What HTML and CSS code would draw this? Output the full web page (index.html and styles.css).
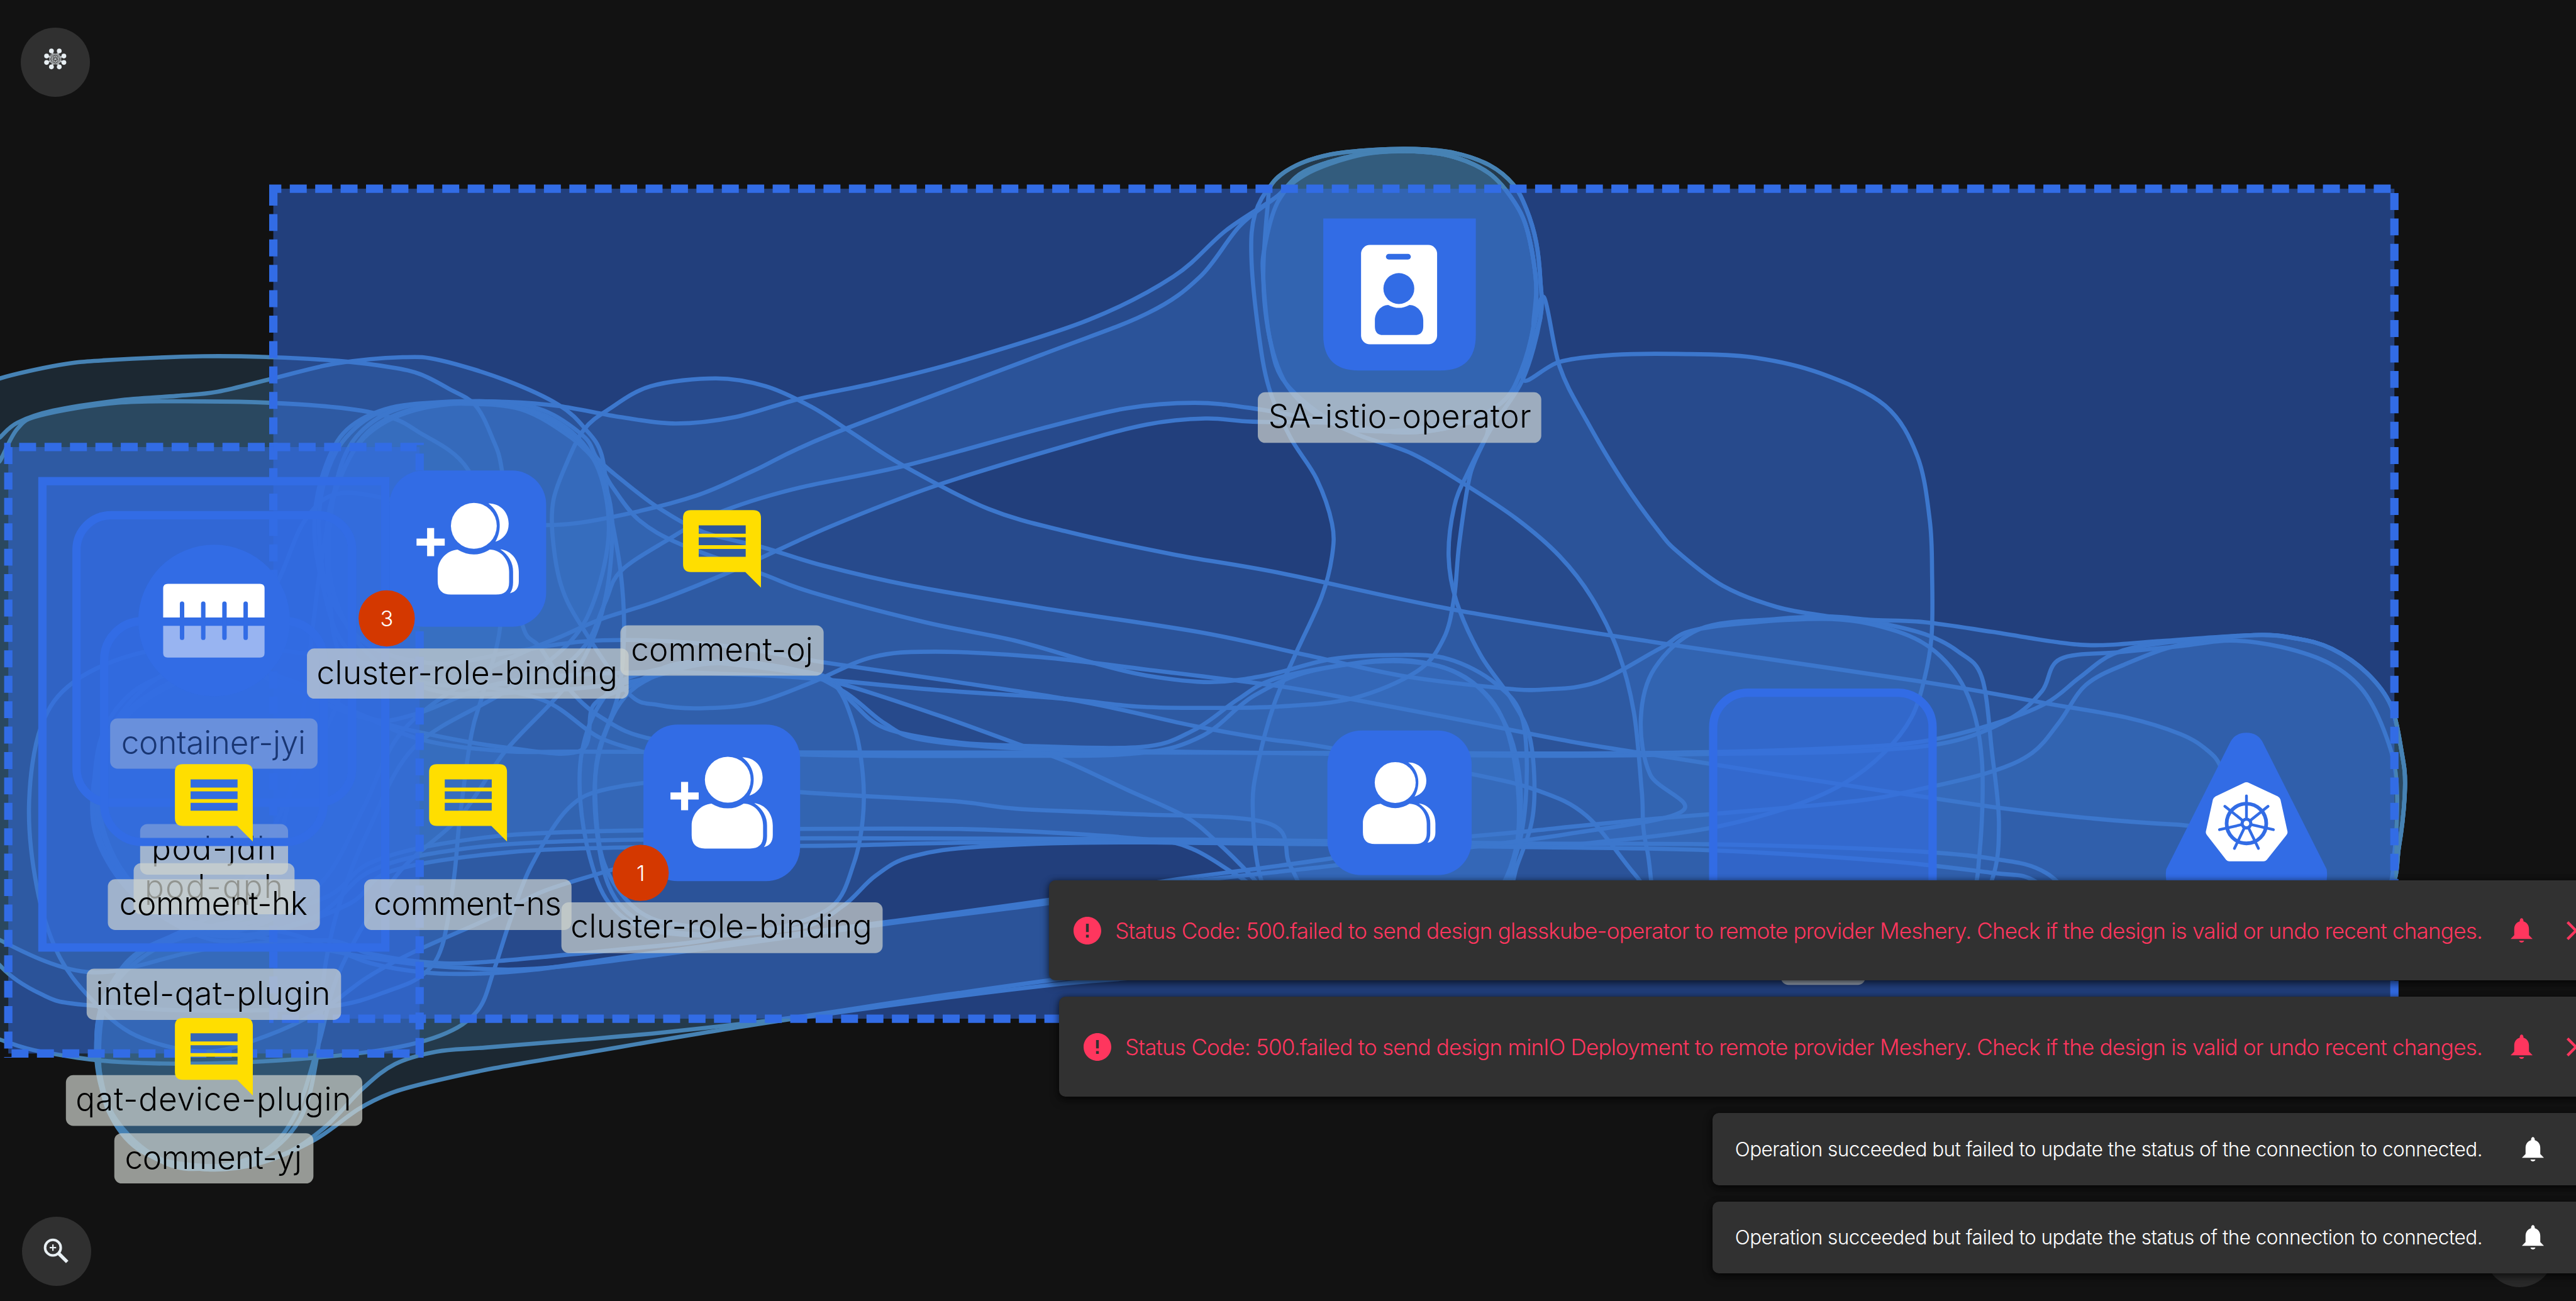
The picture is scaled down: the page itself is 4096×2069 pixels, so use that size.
FILE: index.html
```html
<!DOCTYPE html>
<html lang="en">
<head>
<meta charset="utf-8">
<title>Design canvas</title>
<link rel="stylesheet" href="styles.css">
</head>
<body>
<main class="workspace">
<svg class="canvas" viewBox="0 0 5589 2823">
  <defs>
    <symbol id="comment" viewBox="0 0 189 189" overflow="visible">
      <path fill="#ffde00" fill-rule="evenodd" d="M19 0H170Q189 0 189 19V188L151 150H19Q0 150 0 131V19Q0 0 19 0ZM38 37V57H152V37ZM38 66V85H152V66ZM38 94V113H152V94Z"/>
    </symbol>
    <g id="people">
      <circle cx="344" cy="462" r="52"/>
      <path d="M377 411C404 411 423 431 423 457C423 479 411 492 393 498C408 472 408 434 377 411Z"/>
      <path d="M307 516Q325 527 344 527Q363 527 380 516C406 516 424 540 424 566V590Q424 618 394 618H292Q262 618 262 588V566C262 540 282 518 307 516Z"/>
      <path d="M404 515C430 518 446 540 446 566V588Q446 610 426 615Q433 605 433 590V566Q433 535 404 515Z"/>
    </g>
    <path id="plus" d="M238 467H254V491H278V507H254V531H238V507H214V491H238Z"/>
  </defs>
  <g id="bubbles" class="bubbles"></g>

  <rect class="group-fill" x="593" y="409.5" width="4602" height="1801"/>
  <g class="dashes">
    <path d="M584 409.5H5204" stroke-dashoffset="10.4"/>
    <path d="M593 400.5V2219" stroke-dashoffset="46.4"/>
    <path d="M5195 400.5V2219" stroke-dashoffset="36.8"/>
    <path d="M584 2210.5H5204" stroke-dashoffset="27.4"/>
  </g>
  <rect class="group-fill" x="18" y="970" width="892.5" height="1316"/>
  <g class="dashes">
    <path d="M9 970H904" stroke-dashoffset="22.6"/>
    <path d="M18 961V2295" stroke-dashoffset="46"/>
    <path d="M910.5 961V2295" stroke-dashoffset="32.1"/>
    <path d="M9 2286H919" stroke-dashoffset="39.1"/>
  </g>
  <rect class="group-box" x="92" y="1044" width="744" height="1012"/>
  <rect class="group-box" x="166" y="1118" width="598" height="624" rx="75"/>
  <g class="label"><rect x="239" y="1559" width="450" height="109" rx="16"/><text x="263" y="1636" textLength="400">container-jyi</text></g>
  <g class="label"><rect x="304" y="1788" width="321" height="110" rx="16"/><text x="329" y="1865" textLength="270">pod-jdh</text></g>
  <rect class="group-box" x="226" y="1348" width="476" height="479" rx="83"/>
  <g class="node">
    <circle cx="464.5" cy="1346.500" r="164.5"/>
    <path fill="#fff" d="M354 1340V1277Q354 1267 364 1267H564Q574 1267 574 1277V1340Z"/>
    <path fill="#98b4f1" d="M354 1358H574V1417Q574 1427 564 1427H364Q354 1427 354 1417Z"/>
    <path class="slots" d="M395 1310V1384M441 1310V1384M487 1310V1384M533 1310V1384"/>
  </g>
  <g class="label"><rect x="290" y="1873" width="349" height="111" rx="16"/><text x="314" y="1949" textLength="300">pod-qph</text></g>

  <rect class="group-box" x="3717" y="1503" width="476" height="490" rx="75"/>
  <g class="label"><rect x="3864" y="2028" width="183" height="109" rx="16"/></g>

  <g class="node">
    <rect x="845" y="1021" width="340" height="339" rx="74"/>
    <g class="glyph" transform="translate(699 699) scale(.9566)"><use href="#people"/><use href="#plus"/></g>
    <rect x="1396" y="1572" width="340" height="340" rx="74"/>
    <g class="glyph" transform="translate(1250 1250) scale(.9566)"><use href="#people"/><use href="#plus"/></g>
    <rect x="2880" y="1585" width="313" height="314" rx="74"/>
    <g class="glyph" transform="translate(2733 1303) scale(.855)"><use href="#people"/></g>
    <path d="M2871 474H3202V727Q3202 804 3125 804H2948Q2871 804 2871 727Z"/>
    <rect class="glyph" x="2953" y="531.5" width="165" height="215.5" rx="19"/>
    <rect x="3007" y="551" width="54" height="12" rx="6"/>
    <circle cx="3035" cy="626" r="33.5"/>
    <path d="M3012 661.600Q3024 668 3035 668T3058 661.600C3075 662 3088 677 3088 695V708Q3088 727 3069 727H3001Q2983 727 2983 708V695C2983 677 2996 662 3012 661.600Z"/>
    <path d="M4838 1612Q4849 1590 4874 1590T4910 1612L5048 1886Q5056 1940 5000 1950H4748Q4692 1940 4700 1886Z"/>
    <path class="glyph" d="M4868 1699Q4874 1696 4880 1699L4942 1728Q4947 1731 4948 1736L4963 1804Q4964 1809 4960 1813L4918 1866Q4915 1869 4911 1869H4837Q4833 1869 4830 1866L4789 1813Q4785 1809 4786 1804L4801 1736Q4802 1731 4807 1728Z"/>
    <g transform="translate(4874 1787)">
      <circle class="wheel" r="43"/>
      <g id="spokes"></g>
      <circle r="13"/><circle class="glyph" r="6"/>
    </g>
  </g>

  <g class="label"><rect x="666" y="1407" width="698" height="109" rx="16"/><text x="687" y="1484" textLength="653">cluster-role-binding</text></g>
  <use href="#comment" x="379.500" y="1658" width="169" height="169"/>
  <use href="#comment" x="931" y="1658" width="169" height="169"/>
  <use href="#comment" x="1482" y="1107" width="169" height="169"/>
  <g class="label"><rect x="2729" y="851" width="615" height="110" rx="16"/><text x="2752" y="928" textLength="570">SA-istio-operator</text></g>
  <g class="label"><rect x="1346" y="1357" width="441" height="109" rx="16"/><text x="1369" y="1434" textLength="395">comment-oj</text></g>
  <g class="label"><rect x="234" y="1908" width="460" height="110" rx="16"/><text x="259" y="1985" textLength="408">comment-hk</text></g>
  <g class="label"><rect x="790" y="1908" width="450" height="110" rx="16"/><text x="811" y="1985" textLength="407">comment-ns</text></g>
  <g class="label"><rect x="1218" y="1958" width="697" height="110" rx="16"/><text x="1238" y="2035" textLength="654">cluster-role-binding</text></g>
  <g class="label"><rect x="188" y="2102" width="552" height="111" rx="16"/><text x="208" y="2180" textLength="509">intel-qat-plugin</text></g>
  <g class="label"><rect x="143" y="2333" width="643" height="110" rx="16"/><text x="164" y="2410" textLength="598">qat-device-plugin</text></g>
  <use href="#comment" x="379.500" y="2209" width="169" height="169"/>
  <g class="label"><rect x="248" y="2459" width="432" height="109" rx="16"/><text x="271" y="2536" textLength="384">comment-yj</text></g>

  <g class="badge"><circle cx="839" cy="1342" r="61"/><text x="839" y="1359">3</text><circle cx="1390" cy="1894" r="61"/><text x="1390" y="1911">1</text></g>
</svg>

<button class="fab fab-menu" aria-label="Menu">
  <svg viewBox="0 0 150 150"><g id="mesh" transform="translate(75 68)"></g></svg>
</button>
<button class="fab fab-zoom" aria-label="Zoom">
  <svg viewBox="0 0 150 150"><g class="lens"><circle cx="67" cy="67" r="17"/><path d="M79 79L98 98" stroke-width="7.500"/><path d="M60 67H74M67 60V74" stroke-width="3"/></g></svg>
</button>
<div class="fab fab-help"></div>

<section class="toasts">
  <div class="toast error">
    <svg class="alert" viewBox="2 2 20 20"><path d="M12 2C6.480 2 2 6.480 2 12s4.480 10 10 10 10-4.480 10-10S17.520 2 12 2zm1 15h-2v-2h2v2zm0-4h-2V7h2v6z"/></svg>
    <span class="msg">Status Code: 500.failed to send design glasskube-operator to remote provider Meshery. Check if the design is valid or undo recent changes.</span>
    <div class="actions"><svg class="bell" viewBox="3 2 18 20"><path d="M12 22c1.100 0 2-.9 2-1.600h-4c0 .7.900 1.600 2 1.600zm6-6v-5c0-3.070-1.640-5.640-4.500-6.320V4c0-.83-.67-1.900-1.500-1.900s-1.500 1.070-1.500 1.900v.68C7.630 5.360 6 7.920 6 11v5l-3 3h18l-3-3z"/></svg><svg class="close" viewBox="5 5 14 14"><path d="M19 6.410L17.590 5 12 10.590 6.410 5 5 6.410 10.590 12 5 17.590 6.410 19 12 13.410 17.590 19 19 17.590 13.410 12z"/></svg></div>
  </div>
  <div class="toast error">
    <svg class="alert" viewBox="2 2 20 20"><path d="M12 2C6.480 2 2 6.480 2 12s4.480 10 10 10 10-4.480 10-10S17.520 2 12 2zm1 15h-2v-2h2v2zm0-4h-2V7h2v6z"/></svg>
    <span class="msg">Status Code: 500.failed to send design minIO Deployment to remote provider Meshery. Check if the design is valid or undo recent changes.</span>
    <div class="actions"><svg class="bell" viewBox="3 2 18 20"><path d="M12 22c1.100 0 2-.9 2-1.600h-4c0 .7.900 1.600 2 1.600zm6-6v-5c0-3.070-1.640-5.640-4.500-6.320V4c0-.83-.67-1.900-1.500-1.900s-1.500 1.070-1.500 1.900v.68C7.630 5.360 6 7.920 6 11v5l-3 3h18l-3-3z"/></svg><svg class="close" viewBox="5 5 14 14"><path d="M19 6.410L17.590 5 12 10.590 6.410 5 5 6.410 10.590 12 5 17.590 6.410 19 12 13.410 17.590 19 19 17.590 13.410 12z"/></svg></div>
  </div>
  <div class="toast info">
    <span class="msg">Operation succeeded but failed to update the status of the connection to connected.</span>
    <div class="actions"><svg class="bell" viewBox="3 2 18 20"><path d="M12 22c1.100 0 2-.9 2-1.600h-4c0 .7.900 1.600 2 1.600zm6-6v-5c0-3.070-1.640-5.640-4.500-6.320V4c0-.83-.67-1.900-1.500-1.900s-1.500 1.070-1.500 1.900v.68C7.630 5.360 6 7.920 6 11v5l-3 3h18l-3-3z"/></svg></div>
  </div>
  <div class="toast info">
    <span class="msg">Operation succeeded but failed to update the status of the connection to connected.</span>
    <div class="actions"><svg class="bell" viewBox="3 2 18 20"><path d="M12 22c1.100 0 2-.9 2-1.600h-4c0 .7.900 1.600 2 1.600zm6-6v-5c0-3.070-1.640-5.640-4.500-6.320V4c0-.83-.67-1.900-1.500-1.900s-1.500 1.070-1.500 1.900v.68C7.630 5.360 6 7.920 6 11v5l-3 3h18l-3-3z"/></svg></div>
  </div>
</section>
</main>
<script src="bubbles.js"></script>
</body>
</html>
```
FILE: styles.css
```css
* { box-sizing: border-box; }
body { margin: 0; background: #121212; overflow: hidden; font-family: Inter, "Noto Sans", sans-serif; font-weight: 300; }
.workspace { position: relative; width: 4096px; height: 2069px; overflow: hidden; }
.canvas { display: block; width: 4096px; height: 2069px; }
.bubbles path { fill: #4682b4; fill-opacity: .2; stroke: #4682b4; stroke-width: 9; }
.group-fill { fill: #326ce5; fill-opacity: .5; }
.dashes path { fill: none; stroke: #326ce5; stroke-width: 18; stroke-dasharray: 36.76 18.38; }
.group-box { fill: #326ce5; fill-opacity: .5; stroke: #326ce5; stroke-width: 18; }
.node { fill: #326ce5; }
.slots { stroke: #326ce5; stroke-width: 9.6; stroke-linecap: round; }
.glyph { fill: #fff; }
.wheel { fill: none; stroke: #326ce5; stroke-width: 8; }
.spoke { stroke: #326ce5; stroke-width: 6; stroke-linecap: round; }
.label rect { fill: #cfd3cd; fill-opacity: .7; }
.label text { font-size: 70px; fill: #000; }
.badge { fill: #d43800; }
.badge text { fill: #fff; font-size: 47px; text-anchor: middle; }

.fab { position: absolute; width: 110px; height: 110px; padding: 0; border: 0; border-radius: 50%; background: #303030; }
.fab svg { display: block; width: 110px; height: 110px; }
.fab-menu { left: 33px; top: 44px; }
.fab-zoom { left: 35px; top: 1935px; }
.fab-help { left: 3951px; top: 1937px; background: #2a2a2a; }
.lens { fill: none; stroke: #e8eff3; stroke-width: 5.5; }
.mesh-dot { fill: #e8eff3; }
.mesh-link { stroke: #e8eff3; stroke-width: .8; }

.toasts { position: absolute; right: -110px; bottom: 44px; display: flex; flex-direction: column; align-items: flex-end; gap: 26px; }
.toast { display: flex; align-items: center; border-radius: 10px; background: #313131; white-space: nowrap; box-shadow: 0 6px 14px rgba(0,0,0,.5), 0 0 10px rgba(0,0,0,.4); }
.toast svg { fill: currentColor; display: block; flex: none; }
.error { height: 159px; padding-left: 39px; color: #ff365e; font-size: 35px; letter-spacing: -.79px; }
.info { height: 114.500px; padding-left: 36px; color: #fff; font-size: 31.500px; letter-spacing: -.54px; }
.alert { width: 44px; height: 44px; margin-right: 22px; }
.actions { display: flex; align-items: center; width: 259px; }
.bell { width: 39px; height: 39px; }
.error .bell { margin-left: 43px; }
.info .bell { margin-left: 61px; }
.close { width: 30px; height: 30px; margin-left: 52px; }
```
FILE: bubbles.js
```js
const SVG = 'http://www.w3.org/2000/svg';

function add(parent, tag, attrs) {
  const el = document.createElementNS(SVG, tag);
  for (const k in attrs) el.setAttribute(k, attrs[k]);
  parent.appendChild(el);
}

// Closed outline of each relationship set, as x,y pairs on the canvas.
const saTop = [2761,397, 2812,359, 2887,335, 2979,325, 3071,323, 3157,332, 3231,358, 3283,400, 3312,454, 3333,525, 3342,607];
const saInner = [2789,831, 2755,735, 2741,607, 2743,541, 2772,439, 2830,380, 2944,338, 3048,328, 3145,338, 3231,376, 3286,439, 3315,505, 3333,617, 3327,709, 3300,806, 3260,872, 3174,918, 3094,936, 3002,936];
const saMid = [2772,425, 2830,372, 2944,336, 3048,328, 3145,338, 3231,376, 3286,439, 3315,505, 3333,617, 3327,709, 3300,806, 3260,872, 3174,918, 3094,936, 3002,936, 2898,918];
const triangle = [4891,1378, 4985,1386, 5060,1408, 5135,1460, 5187,1530, 5211,1633, 5218,1710, 5205,1837, 5180,1940, 5050,2060, 4891,2090];
const triangleIn = [4731,1402, 4840,1390, 4950,1404, 5055,1440, 5128,1500, 5178,1600, 5200,1700, 5195,1850, 5170,1950, 5040,2060, 4880,2090, 4700,2070];

const sets = [
  [...saMid, 2718,886, 2592,874, 2443,886, 2259,930, 1961,1011, 1719,1062, 1553,1115, 1446,1173, 1346,1240, 1313,1307, 1270,1400, 1190,1460, 1015,1490, 830,1460, 740,1390, 700,1270, 682,1150, 697,1040, 745,940, 835,888, 965,872, 1097,872, 1213,881, 1346,905, 1466,919, 1595,905, 1736,865, 1900,831, 2087,783, 2362,694, 2546,600, 2660,500],
  [...saMid, 2718,915, 2615,908, 2489,921, 2317,966, 2030,1054, 1800,1143, 1595,1236, 1429,1303, 1305,1343, 1213,1383, 1139,1414, 1014,1477, 870,1590, 790,1750, 710,1900, 600,1990, 464,2020, 310,1950, 232,1854, 205,1746, 220,1600, 290,1500, 420,1440, 540,1380, 606,1255, 663,1127, 740,1070, 900,1095, 1060,1130, 1205,1139, 1346,1118, 1512,1075, 1636,1021, 1800,944, 2259,770, 2489,680, 2604,600, 2690,490],
  [...saTop, 3342,690, 3304,823, 3235,930, 3183,1029, 3155,1100, 3143,1207, 3160,1305, 3212,1421, 3281,1520, 3321,1609, 3327,1760, 3292,1877, 3240,2000, 3036,2060, 2800,2010, 2736,1908, 2718,1752, 2730,1654, 2764,1529, 2810,1421, 2867,1296, 2890,1207, 2890,1136, 2856,1038, 2799,948, 2753,841, 2730,716, 2715,556, 2723,464],
  [...saInner.slice(2,28), 3350,645, 3384,796, 3442,912, 3522,1046, 3600,1154, 3643,1200, 3738,1271, 3855,1317, 3972,1338, 4059,1348, 4176,1376, 4249,1414, 4300,1470, 4322,1633, 4337,1786, 4322,1909, 4250,2040, 3955,2080, 3640,2040, 3573,1841, 3562,1716, 3545,1546, 3510,1412, 3453,1296, 3384,1207, 3292,1127, 3178,1051, 3063,984, 2948,944, 2850,895, 2789,831],
  [...saTop, 3342,690, 3304,823, 3384,785, 3500,770, 3640,768, 3800,775, 3950,810, 4090,880, 4160,990, 4187,1130, 4192,1250, 4191,1378, 4176,1470, 4147,1557, 4088,1633, 4001,1700, 3884,1751, 3709,1797, 3490,1825, 3300,1836, 2750,1829, 2144,1828, 1800,1835, 1400,1838, 1097,1850, 850,1890, 760,1960, 600,2020, 464,2040, 310,1960, 225,1854, 200,1746, 230,1600, 330,1480, 464,1430, 640,1500, 800,1560, 900,1550, 1097,1480, 1379,1459, 1595,1463, 1761,1472, 2030,1497, 2294,1515, 2466,1533, 2604,1536, 2776,1533, 2936,1515, 3074,1457, 3132,1386, 3155,1296, 3166,1180, 3190,1029, 3228,930, 3174,918, 3002,936, 2898,918, 2789,831, 2755,735, 2741,607, 2750,450],
  [-60,850, 0,821, 128,792, 223,782, 440,773, 587,775, 734,783, 849,797, 912,812, 973,843, 1031,879, 1068,950, 1089,1021, 1105,1200, 1135,1361, 1172,1405, 1230,1490, 1305,1557, 1421,1605, 1700,1636, 2207,1640, 2474,1634, 2610,1596, 2720,1510, 2850,1455, 3040,1435, 3180,1470, 3270,1580, 3300,1740, 3270,1900, 3180,2010, 3036,2040, 2870,1990, 2800,1880, 2750,1786, 2446,1766, 2207,1755, 2063,1738, 1738,1719, 1500,1695, 1322,1711, 1232,1755, 1152,1880, 1107,1997, 1072,2104, 1036,2193, 955,2247, 804,2282, 536,2305, 268,2305, 89,2282, 0,2256, -60,2235],
  [-40,990, 0,949, 38,917, 115,891, 255,869, 383,859, 472,850, 593,821, 727,789, 874,775, 957,782, 1097,825, 1213,879, 1271,932, 1305,986, 1321,1093, 1346,1236, 1354,1370, 1341,1508, 1298,1633, 1292,1740, 1307,1862, 1355,1948, 1422,1996, 1530,2015, 1560,2032, 1500,2045, 1400,2055, 1072,2086, 938,2089, 804,2070, 700,2040, 446,2060, 200,2110, 0,2040, -60,1980],
  [-30,1050, 0,1000, 38,930, 89,901, 255,874, 440,871, 587,874, 740,885, 842,904, 906,936, 1014,1017, 1080,1200, 1085,1361, 1048,1504, 1023,1593, 998,1772, 985,1905, 960,2050, 920,2113, 848,2148, 714,2184, 446,2193, 179,2180, 89,2157, 0,2095, -50,2000],
  [1267,932, 1321,888, 1412,838, 1553,821, 1661,838, 1761,883, 1850,940, 1961,1011, 2144,1104, 2317,1154, 2546,1203, 2776,1243, 3155,1323, 3600,1395, 4176,1480, 4439,1526, 4614,1557, 4731,1593, 4789,1628, 4818,1664, 4840,1740, 4800,1790, 4716,1789, 4541,1776, 4322,1751, 3884,1685, 3600,1640, 3407,1609, 3178,1564, 2948,1520, 2776,1489, 2489,1453, 2259,1426, 2030,1414, 1892,1426, 1761,1481, 1636,1526, 1520,1537, 1429,1530, 1363,1504, 1263,1361, 1218,1272, 1199,1164, 1201,1084, 1230,1004],
  [750,950, 835,890, 965,873, 1097,873, 1190,895, 1270,950, 1296,995, 1346,1039, 1429,1102, 1528,1155, 1653,1187, 1785,1227, 1972,1270, 2259,1319, 2604,1372, 2833,1421, 3040,1466, 3258,1493, 3350,1496, 3465,1480, 3600,1408, 3690,1364, 3951,1343, 4100,1365, 4200,1415, 4270,1510, 4300,1650, 4295,1850, 4270,1950, 4150,2050, 3800,2050, 3630,1990, 3545,1895, 3442,1770, 3338,1716, 3195,1680, 2856,1618, 2750,1604, 2589,1575, 2350,1523, 2044,1475, 1786,1437, 1600,1405, 1420,1390, 1263,1392, 1114,1414, 950,1440, 800,1400, 715,1290, 692,1150, 705,1040],
  [790,930, 880,882, 1000,876, 1130,888, 1240,950, 1300,1010, 1329,1057, 1387,1129, 1479,1182, 1653,1245, 1761,1285, 2007,1350, 2202,1390, 2374,1439, 2489,1466, 2627,1480, 2753,1464, 2890,1430, 3028,1421, 3143,1430, 3246,1484, 3304,1564, 3310,1740, 3280,1880, 3200,2000, 2900,2020, 2790,1990, 2714,1900, 2637,1824, 2570,1771, 2446,1714, 2312,1652, 2207,1614, 2044,1555, 1843,1489, 1709,1456, 1537,1440, 1365,1480, 1160,1500, 950,1500, 800,1420, 725,1290, 715,1150, 740,1010],
  [1259,1629, 1288,1530, 1365,1490, 1450,1445, 1537,1437, 1709,1456, 1795,1470, 1850,1525, 1920,1580, 2063,1609, 2207,1618, 2474,1621, 2589,1585, 2685,1518, 2760,1475, 2900,1445, 3040,1432, 3160,1460, 3250,1540, 3290,1680, 3290,1840, 3240,1960, 3036,2030, 2800,1970, 2685,1900, 2589,1843, 2494,1822, 2207,1803, 1920,1798, 1250,1805, 982,1827, 804,1872, 700,1950, 464,2010, 290,1920, 215,1746, 270,1560, 464,1455, 640,1490, 799,1557, 915,1590, 1097,1622],
  [1280,1861, 1259,1736, 1263,1629, 1300,1530, 1365,1470, 1537,1437, 1700,1450, 1805,1480, 1853,1575, 1872,1680, 1872,1776, 1853,1872, 1805,1967, 1680,2015, 1540,2030, 1400,2015, 1321,1959],
  [...triangle, 4700,2070, 4540,1990, 4439,1894, 4322,1863, 4118,1845, 3709,1832, 3300,1830, 2600,1822, 1800,1819, 1250,1825, 982,1845, 804,1890, 680,1990, 464,2030, 290,1930, 210,1746, 260,1560, 464,1445, 640,1480, 760,1540, 915,1605, 1097,1630, 1263,1631, 1900,1633, 2600,1633, 3300,1635, 3709,1632, 4030,1621, 4176,1608, 4322,1572, 4439,1526, 4512,1470, 4585,1419, 4687,1396],
  [...triangleIn, 4500,1980, 4410,1909, 4322,1894, 4088,1868, 3709,1845, 3300,1838, 2494,1828, 2144,1836, 1980,1858, 1900,1900, 1830,1965, 1740,2012, 1540,2028, 1400,2005, 1320,1920, 1290,1740, 1310,1600, 1380,1490, 1537,1437, 1720,1452, 1830,1500, 1920,1570, 2000,1605, 2207,1624, 2474,1630, 3300,1640, 3709,1636, 4030,1630, 4230,1610, 4360,1560, 4430,1500, 4470,1430, 4600,1415],
  [...triangle, 3500,2080, 2700,2095, 2465,2121, 2302,2135, 2015,2170, 1633,2224, 1250,2288, 1072,2318, 929,2349, 848,2372, 777,2407, 680,2475, 560,2525, 446,2537, 330,2510, 250,2430, 213,2330, 213,2220, 245,2130, 310,2060, 446,2014, 600,2020, 714,2055, 804,2090, 920,2110, 1027,2113, 1161,2104, 1400,2070, 1920,2001, 2274,1953, 2541,1910, 2879,1864, 3100,1825, 3300,1805, 3563,1779, 4001,1741, 4176,1710, 4322,1674, 4410,1633, 4468,1567, 4526,1486, 4614,1440, 4731,1399],
  [3690,1364, 3855,1343, 3972,1338, 4059,1345, 4176,1350, 4322,1371, 4468,1394, 4556,1400, 4687,1391, ...triangle, 3500,2085, 2700,2090, 2400,2112, 2015,2164, 1728,2207, 1441,2240, 1250,2257, 1054,2273, 947,2282, 857,2309, 786,2363, 700,2450, 600,2510, 446,2530, 310,2500, 235,2410, 215,2290, 235,2160, 320,2070, 446,2025, 600,2040, 800,2078, 1000,2100, 1250,2094, 1920,2005, 2274,1960, 2541,1918, 2879,1880, 3100,1850, 3400,1810, 3650,1760, 3580,1680, 3560,1560, 3590,1450],
  [446,2014, 300,2070, 225,2170, 210,2280, 240,2410, 330,2505, 446,2537, 560,2515, 650,2430, 688,2291, 705,2100, 740,1950, 800,1800, 900,1620, 1097,1500, 1230,1400, 1290,1300, 1321,1146, 1290,1000, 1200,910, 1060,875, 900,890, 790,950, 730,1060, 700,1200, 680,1350, 650,1600, 600,1850, 540,1980],
  [295,2075, 220,2190, 213,2300, 250,2430, 350,2520, 450,2535, 570,2500, 640,2420, 690,2270, 740,2100, 860,1900, 998,1772, 1097,1629, 1230,1486, 1296,1361, 1325,1220, 1321,1080, 1260,960, 1130,885, 960,875, 820,920, 750,1010, 710,1140, 720,1350, 740,1500, 640,1700, 500,1950],
  [308,1416, 161,1479, 89,1577, 63,1746, 80,1925, 125,2068, 196,2166, 295,2247, 446,2282, 580,2247, 700,2190, 795,2122, 893,2068, 1072,1988, 1179,1934, 1322,1889, 1450,1850, 1560,1760, 1500,1680, 1421,1640, 1300,1600, 1180,1520, 1000,1480, 800,1440, 500,1400]
];

// Catmull-Rom spline through the points, emitted as cubic segments.
function outline(flat) {
  const p = [];
  for (let i = 0; i < flat.length; i += 2) p.push([flat[i], flat[i + 1]]);
  const n = p.length, at = i => p[(i + n) % n];
  let d = 'M' + p[0];
  for (let i = 0; i < n; i++) {
    const a = at(i - 1), b = at(i), c = at(i + 1), e = at(i + 2);
    d += 'C' + [b[0] + (c[0] - a[0]) / 6, b[1] + (c[1] - a[1]) / 6,
      c[0] - (e[0] - b[0]) / 6, c[1] - (e[1] - b[1]) / 6, c[0], c[1]].join(' ');
  }
  return d + 'Z';
}
const bubbles = document.getElementById('bubbles');
sets.forEach(s => add(bubbles, 'path', { d: outline(s) }));

const spokes = document.getElementById('spokes');
for (let i = 0; i < 7; i++) {
  const t = -Math.PI / 2 + i * 2 * Math.PI / 7;
  add(spokes, 'path', { class: 'spoke', d: `M0 0L${60 * Math.cos(t)} ${60 * Math.sin(t)}` });
}

const mesh = document.getElementById('mesh');
const dots = [[-8.5,-17.5],[8.5,-17.5],[18.5,-6.5],[18.5,7.5],[8.5,17],[-8.5,17],[-19,7.5],[-19,-6.5]];
dots.forEach((a, i) => dots.slice(i + 2).forEach(b =>
  add(mesh, 'path', { class: 'mesh-link', d: `M${a.map(v => v * .75)}L${b.map(v => v * .75)}` })));
dots.forEach(a => add(mesh, 'circle', { class: 'mesh-dot', cx: a[0], cy: a[1], r: 5.2 }));
```
